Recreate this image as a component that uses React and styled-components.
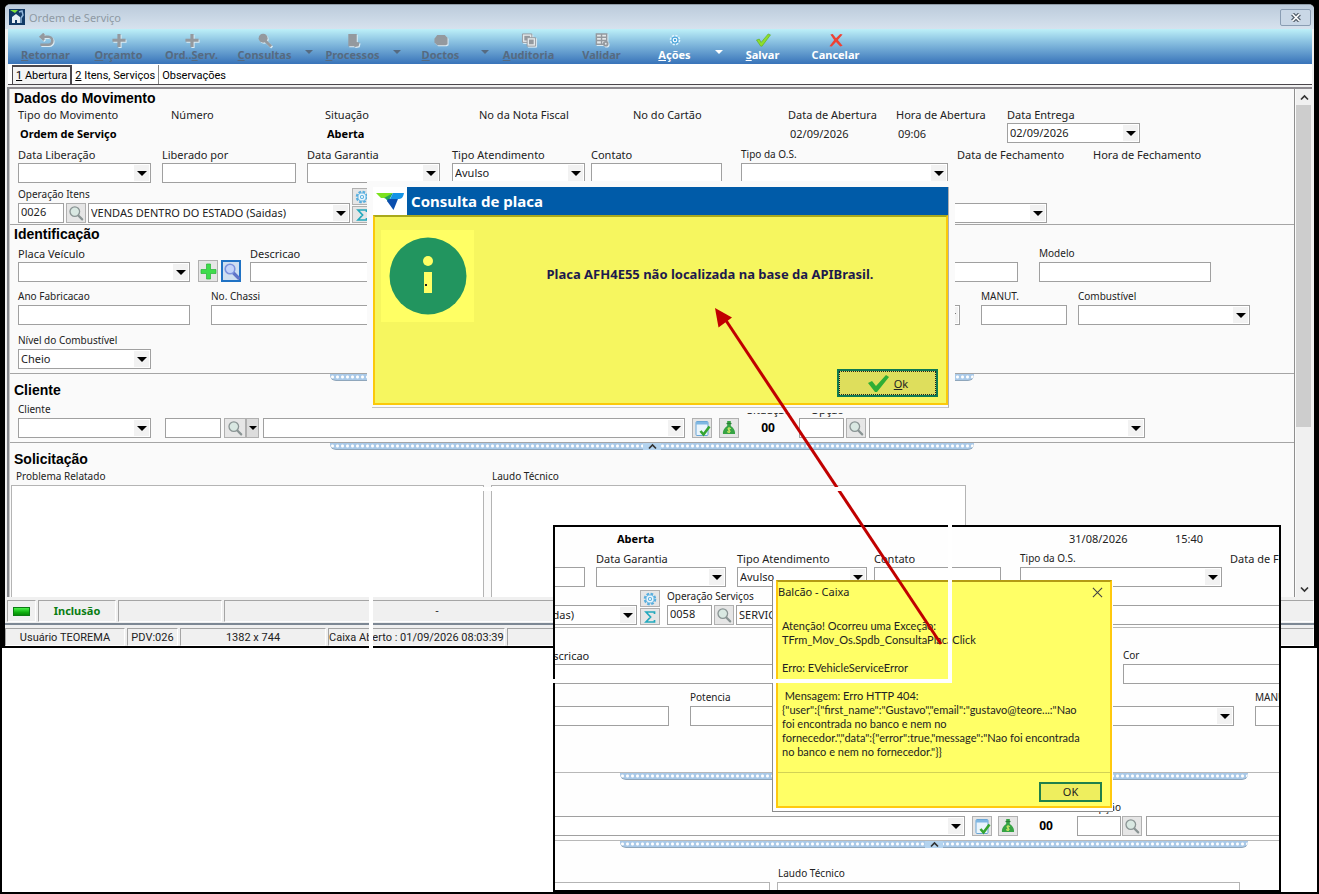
import React, { useId } from 'react';
import styled, { createGlobalStyle, css } from 'styled-components';

const GlobalStyle = createGlobalStyle`
  * {
    box-sizing: border-box;
  }
  body {
    margin: 0;
    background: #fff;
  }
  button, input, select, textarea {
    font: inherit;
    color: inherit;
    margin: 0;
    padding: 0;
    border-radius: 0;
  }
`

const Page = styled.div`
  position: relative;
  min-height: 100vh;
  border: 2px solid #000;
  overflow: hidden;
  background: #fff;
  font-family: "Noto Sans", "Open Sans", sans-serif;
  font-size: 11px;
  color: #222;
`
const Frame = styled.div`
  background: #000;
  padding: 2px 3px 2px 3px;
`
const Window = styled.div`
  background: #f0f0f0;
  border-radius: 5px 5px 0 0;
  border-top: 1px solid #8f9ba6;
  overflow: hidden;
`

/* title bar and toolbar */

const TitleBar = styled.header`
  height: 24px;
  padding: 0 3px 0 4px;
  display: flex;
  align-items: center;
  gap: 4px;
  background: linear-gradient(#bccbdb, #d6e2ee);
  color: #8f9aa4;
`
const WindowTitle = styled.h1`
  flex: 1;
  margin: 0;
  font-size: 11px;
  font-weight: 400;
`
const CloseButton = styled.button`
  width: 31px;
  height: 17px;
  display: grid;
  place-items: center;
  border: 1px solid #8a9db3;
  border-radius: 2px;
  background: #c9d7e6;
`
const ToolBar = styled.nav`
  height: 35px;
  margin: 0 2px 0 3px;
  padding-left: 1px;
  display: flex;
  background: linear-gradient(#bdf0f8, #8cc3e2 35%, #3873b9);
`
const ToolButton = styled.button`
  width: 73px;
  padding-top: 4px;
  display: flex;
  flex-direction: column;
  align-items: center;
  border: 0;
  background: none;
  font-weight: 700;
  font-size: 11px;
  line-height: 14px;
  color: ${props => (props.disabled ? '#566a80' : '#fff')};
  svg {
    width: 18px;
    height: 15px;
    ${props => props.disabled && css`filter: drop-shadow(1px 1px 0 #dcecf5);`}
  }
`
const ToolArrow = styled.button`
  width: 15px;
  display: grid;
  place-items: center;
  padding-top: 10px;
  border: 0;
  background: none;
  &::before {
    content: "";
    border: 4px solid transparent;
    border-bottom: 0;
    border-top-color: ${props => (props.disabled ? '#566a80' : '#fff')};
  }
`

/* tabs */

const Tabs = styled.div`
  height: 21px;
  margin: 0 2px 0 3px;
  padding: 1px 0 0 4px;
  display: flex;
  align-items: stretch;
  background: #fff;
  border-bottom: 1px solid #4a464b;
  font-family: Roboto, "Liberation Sans", sans-serif;
  font-size: 11px;
  color: #000;
`
const Tab = styled.button`
  padding: 2px 3px 0;
  border: 0;
  background: none;
  border-right: 1px solid #888;
  ${props => props.$active && css`
    background: #f4f4f4;
    border: 1px solid #4a464b;
    border-bottom: 0;
    border-width: 2px 2px 0 1px;
    padding-top: 0;
  `}
  &:last-child {
    border-right: 0;
  }
`

/* form */

const Body = styled.div`
  margin: 2px 2px 0 2px;
  display: flex;
  border-top: 2px solid #8d8a8f;
  border-left: 2px solid #85878c;
  background: #fafafa;
`
const Form = styled.form`
  flex: 1;
  min-width: 0;
  border-left: 1px solid #c8c8c8;
  border-right: 1px solid #8f8f8f;
`
const Section = styled.section`
  padding-bottom: ${props => props.$bottom}px;
  border-bottom: 1px solid #a5a5a5;
`
const Heading = styled.h2`
  margin: 0;
  padding-left: 4px;
  height: 19px;
  line-height: 18px;
  font-family: "Liberation Sans", Arial, sans-serif;
  font-size: 14px;
  font-weight: 700;
  color: #000;
`
const Row = styled.div`
  display: flex;
  align-items: flex-end;
  padding-left: ${props => props.$left ?? 8}px;
  margin-top: ${props => props.$top}px;
`
const FieldBox = styled.div`
  flex: 0 0 auto;
  width: ${props => props.$w}px;
  margin-left: ${props => props.$gap || 0}px;
`
const Label = styled.label`
  display: block;
  height: 15px;
  line-height: ${props => (props.$small ? 12 : 13)}px;
  white-space: nowrap;
  font-size: ${props => (props.$small ? 10 : 11)}px;
  text-align: ${props => props.$align || 'left'};
`
const Value = styled.output`
  display: block;
  height: 20px;
  line-height: 21px;
  padding-left: 2px;
  white-space: nowrap;
  font-weight: ${props => (props.$bold ? 700 : 400)};
  color: ${props => (props.$bold ? '#000' : '#222')};
`
const TextInput = styled.input`
  display: block;
  width: 100%;
  height: 20px;
  padding: 0 2px 3px;
  border: 1px solid #a0a0a0;
  background: #fff;
`
const ComboBox = styled.div`
  position: relative;
  flex: ${props => (props.$w ? `0 0 ${props.$w}px` : '1')};
  min-width: 0;
  margin-left: ${props => props.$gap || 0}px;
  display: grid;
  select {
    grid-area: 1 / 1;
    width: 100%;
    height: 20px;
    padding: 0 18px 2px 2px;
    appearance: none;
    border: 1px solid #a0a0a0;
    background: linear-gradient(#f2f2f2, #f2f2f2) right 1px center / 15px 16px no-repeat #fff;
  }
  &::after {
    content: "";
    grid-area: 1 / 1;
    align-self: center;
    justify-self: end;
    margin-right: 4px;
    border: 5px solid transparent;
    border-bottom: 0;
    border-top-color: #000;
    pointer-events: none;
  }
`
const IconButton = styled.button`
  flex: 0 0 auto;
  width: ${props => props.$w || 20}px;
  height: ${props => props.$h || 20}px;
  margin-left: ${props => props.$gap || 0}px;
  display: grid;
  place-items: center;
  border: ${props => (props.$focus ? '2px solid #1f72c4' : '1px solid #b0b0b0')};
  background: ${props => (props.$focus ? '#cfdff0' : '#e6e6e6')};
`
const DropButton = styled(IconButton)`
  background: #dcdcdc;
  &::before {
    content: "";
    border: 4px solid transparent;
    border-bottom: 0;
    border-top-color: #000;
  }
`
const Stack = styled.div`
  display: flex;
  flex-direction: column;
  gap: 1px;
  margin-left: ${props => props.$gap}px;
`
const Controls = styled.div`
  display: flex;
`
const Situation = styled.output`
  display: block;
  height: 20px;
  line-height: 20px;
  text-align: center;
  font-size: 12px;
  font-weight: 700;
  color: #000;
`
const SplitterBar = styled.div`
  width: ${props => props.$w}px;
  height: 7px;
  margin: 0 auto;
  display: flex;
  justify-content: center;
  border-radius: 0 0 6px 6px;
  border-bottom: 1px solid #8fa6bb;
  background: radial-gradient(circle, #fff 1px, #a9c9e8 2px) 0 0 / 5px 6px;
`
const Knob = styled.button`
  width: 18px;
  height: 7px;
  display: grid;
  place-items: center;
  border: 0;
  background: #b3d3ef;
`
const Memo = styled.textarea`
  display: block;
  width: 100%;
  height: ${props => props.$h}px;
  resize: none;
  border: 1px solid #b4b4b4;
  border-bottom: 0;
  background: #fff;
`
const MemoLabel = styled(Label)`
  padding-left: ${props => props.$left}px;
`

/* scroll bar */

const ScrollBar = styled.div`
  width: 16px;
  margin-left: 1px;
  display: flex;
  flex-direction: column;
  background: #f0f0f0;
`
const ScrollButton = styled.button`
  height: 16px;
  display: grid;
  place-items: center;
  border: 0;
  background: #f0f0f0;
`
const Thumb = styled.div`
  height: 322px;
  margin-right: 1px;
  background: #cdcdcd;
`
const Track = styled.div`
  flex: 1;
`

/* status bars */

const StatusBar = styled.footer`
  height: ${props => props.$h}px;
  padding: ${props => props.$top}px 0 0 ${props => props.$left}px;
  display: flex;
  gap: 2px;
  font-family: Roboto, "Liberation Sans", sans-serif;
  color: #222;
`
const StatusCell = styled.div`
  flex: ${props => (props.$w ? `0 0 ${props.$w}px` : '1')};
  display: flex;
  align-items: center;
  justify-content: center;
  white-space: nowrap;
  border: 1px solid #a5a5a5;
  border-right-color: #fff;
  border-bottom-color: #fff;
  font-size: 11px;
`
const Mode = styled.strong`
  font-family: "Noto Sans", sans-serif;
  line-height: 16px;
  color: #0a7d12;
`
const Lamp = styled.span`
  width: 17px;
  height: 9px;
  border: 1px solid #0a7d12;
  background: linear-gradient(#4cf04c, #10b010 60%, #078a07);
`
const Divider = styled.div`
  margin: 1px 0 3px;
  height: 2px;
  background: #7d8894;
`

/* plate dialog */

const PlateShot = styled.div`
  position: absolute;
  left: 365px;
  top: 179px;
  width: 588px;
  padding: 6px 6px 5px 5px;
  background: #fafafa;
`
const PlateDialog = styled.div`
  border-right: 1px solid #b0b0b0;
  border-bottom: 1px solid #c4c4c4;
  padding: 0 0 2px 1px;
`
const PlateTitle = styled.div`
  display: flex;
  height: 28px;
`
const Logo = styled.div`
  width: 34px;
  display: grid;
  place-items: center;
  background: #fff;
`
const PlateHeading = styled.h2`
  flex: 1;
  margin: 0;
  padding-left: 4px;
  line-height: 29px;
  font-size: 15px;
  font-weight: 700;
  color: #fff;
  background: #005ba8;
`
const PlateBody = styled.div`
  height: 190px;
  padding: 13px 8px 6px 6px;
  display: grid;
  grid-template-columns: 93px 1fr;
  grid-template-rows: 92px 1fr;
  background: #f6f65f;
  border: 2px solid #fbc90a;
  border-top-color: #a9a91c;
`
const InfoBadge = styled.div`
  display: grid;
  place-items: center;
  background: #ffff64;
`
const PlateMessage = styled.p`
  margin: 0;
  padding-left: 8px;
  text-align: center;
  line-height: 88px;
  font-size: 13px;
  font-weight: 700;
  color: #1d1a4d;
`
const PlateOk = styled.button`
  grid-column: 1 / 3;
  justify-self: end;
  align-self: end;
  width: 101px;
  height: 28px;
  display: flex;
  align-items: center;
  justify-content: center;
  gap: 4px;
  border: 2px solid #0f7a52;
  outline: 1px dotted #222;
  outline-offset: -3px;
  background: #dede5c;
  color: #222;
`

/* second capture */

const Inset = styled.div`
  position: absolute;
  left: 551px;
  top: 523px;
  width: 728px;
  height: 367px;
  border: 2px solid #000;
  background: #fefefe;
  overflow: hidden;
`
const InsetBody = styled.div`
  width: 1000px;
  margin-left: -179px;
`
const InsetSection = styled.div`
  padding-bottom: ${props => props.$bottom}px;
  border-bottom: 1px solid #b8b8b8;
`
const InsetSplitter = styled.div`
  width: 872px;
  padding-left: 244px;
`
const ErrorShot = styled.div`
  position: absolute;
  left: 217px;
  top: 53px;
  width: 341px;
  padding: 0 1px 3px 3px;
  border-left: 1px solid #8c8c8c;
  border-bottom: 1px solid #8c8c8c;
  background: #fff;
`
const ErrorBox = styled.div`
  border: 2px solid #ffc90e;
  border-top: 2px solid #b49b14;
  background: #ffff66;
  color: #222;
`
const ErrorTitle = styled.div`
  height: 37px;
  display: flex;
  justify-content: space-between;
  line-height: 20px;
  button {
    width: 26px;
    height: 20px;
    display: grid;
    place-items: center;
    border: 0;
    background: none;
  }
`
const ErrorText = styled.p`
  margin: 0;
  height: 154px;
  padding-left: 4px;
  font-family: Lato, "Noto Sans", sans-serif;
  line-height: 14px;
  white-space: pre;
  border-bottom: 1px solid #d2d255;
`
const ErrorActions = styled.div`
  padding: 9px 8px 4px;
  display: flex;
  justify-content: flex-end;
  button {
    width: 63px;
    height: 20px;
    line-height: 16px;
    border: 2px solid #20804a;
    background: #eeee5e;
  }
`
const Outline = styled.div`
  position: absolute;
  left: 367px;
  top: 485px;
  width: 583px;
  height: 196px;
  border: 4px solid #fff;
  pointer-events: none;
`
const Arrow = styled.svg`
  position: absolute;
  left: 708px;
  top: 300px;
  pointer-events: none;
`

/* icons */

const SearchIcon = ({ color = '#8a9494', fill = '#d9e8e2' }) => (
  <svg width="16" height="16" viewBox="0 0 16 16">
    <path d="M9.8 10l4.4 4.4" stroke={color} strokeWidth="2.2" strokeLinecap="round" />
    <circle cx="6.8" cy="6.6" r="4.8" fill={fill} stroke={color} strokeWidth="1.3" />
  </svg>
)
const GearIcon = ({ color = '#58aede' }) => (
  <svg width="14" height="14" viewBox="0 0 16 16">
    <circle cx="8" cy="8" r="6" fill="none" stroke={color} strokeWidth="2.4" strokeDasharray="3 1.7" />
    <circle cx="8" cy="8" r="4.6" fill="#e9f6fd" stroke={color} strokeWidth="1" />
    <circle cx="8" cy="8" r="1.8" fill="#fff" stroke={color} strokeWidth="1.2" />
  </svg>
)
const SigmaIcon = () => (
  <svg width="14" height="14" viewBox="0 0 14 14">
    <path d="M11.5 4V2H3l4.6 5L3 12h8.500v-2" fill="none" stroke="#23a9bd" strokeWidth="1.7" />
  </svg>
)
const PlusIcon = () => (
  <svg width="17" height="17" viewBox="0 0 17 17">
    <path d="M6.5 1h4v5.500H16v4h-5.500V16h-4v-5.500H1v-4h5.500z" fill="#3fdc4c" stroke="#25b535" strokeWidth=".7" />
  </svg>
)
const PlateSearchIcon = () => (
  <svg width="18" height="18" viewBox="0 0 18 18">
    <path d="M10 10.500l5.500 5.500" stroke="#5f74c8" strokeWidth="3.200" strokeLinecap="round" />
    <circle cx="7" cy="7" r="4.800" fill="#c3d4fa" stroke="#7d93dd" strokeWidth="1.600" />
  </svg>
)
const NoteIcon = () => (
  <svg width="17" height="17" viewBox="0 0 17 17">
    <rect x="2" y="1.500" width="12" height="14" rx="1" fill="#eaf4fc" stroke="#6aa6d6" />
    <path d="M2 2h12v2.500H2z" fill="#7fb7e2" />
    <path d="M6.500 11l3 3.500 6-8" fill="none" stroke="#35a52f" strokeWidth="2.600" />
  </svg>
)
const MoneyIcon = () => (
  <svg width="16" height="16" viewBox="0 0 16 16">
    <path d="M6.200 1h3.600v5C12.500 7.500 14.500 11 14 14H2c-.5-3 1.500-6.500 4.200-8z" fill="#36a344" />
    <path d="M5.500 3.500h5" stroke="#2b7c36" strokeWidth="1.200" />
    <path d="M9.800 8.500c-2.600-1.400-4.200.6-1.800 1.500s1.200 3-2 1.700M8 7.500v5.500" fill="none" stroke="#dff06a" strokeWidth="1" />
  </svg>
)
const XIcon = ({ size = 11, color = '#444', width = 1.2 }) => (
  <svg width={size} height={size} viewBox="0 0 12 12">
    <path d="M1 1l10 10M11 1L1 11" stroke={color} strokeWidth={width} />
  </svg>
)
const Caret = ({ down }) => (
  <svg width="9" height="7" viewBox="0 0 9 7">
    <path d={down ? 'M1 1.500l3.500 3.500L8 1.500' : 'M1 5.500L4.500 2 8 5.500'} fill="none" stroke="#333" strokeWidth="1.700" />
  </svg>
)

const gray = '#94999e'
const toolIcons = {
  back: <path d="M3 4h8.500a4 4 0 010 8.500H3M7 .8L3.500 4 7 7.500" fill="none" stroke={gray} strokeWidth="2.800" />,
  plus: <path d="M7.300 1h3.400v5H16v3.400h-5.300V15H7.300V9.400H2V6h5.300z" fill={gray} />,
  search: (
    <>
      <circle cx="7" cy="5.500" r="4.800" fill={gray} />
      <path d="M9.500 8.500l6 6" stroke={gray} strokeWidth="3" />
    </>
  ),
  process: <path d="M4 1h9v8.500l3 .5-1 4-4 1-1-1H4z" fill={gray} />,
  docs: <path d="M5 2h8l3 3v7l-2 1H5l-3-3V6z" fill={gray} />,
  audit: (
    <>
      <path d="M2 1h10v9H2z" fill="#e4e8ea" stroke={gray} />
      <path d="M4 3h6v5H4z" fill={gray} />
      <path d="M7 5h9v9H7z" fill="#e4e8ea" stroke={gray} />
      <path d="M9 7h5v5H9z" fill={gray} />
    </>
  ),
  check: (
    <>
      <path d="M3 1h11v11H3zM8.500 1v11M3 4.500h11M3 8h11" fill="#e4e8ea" stroke={gray} strokeWidth="1.500" />
      <circle cx="13" cy="11.500" r="3" fill={gray} />
      <circle cx="13" cy="11.500" r="1" fill="#e4e8ea" />
    </>
  ),
  gear: (
    <>
      <circle cx="9" cy="7.500" r="4.500" fill="none" stroke="#dff3fd" strokeWidth="2.400" strokeDasharray="2.200 1.300" />
      <circle cx="9" cy="7.500" r="3.200" fill="#fff" stroke="#4ba5dc" strokeWidth="1.300" />
      <circle cx="9" cy="7.500" r="1.300" fill="#4ba5dc" />
    </>
  ),
  save: <path d="M2 7.500l3-1 2 3.500L14.500 1 17 2 8 14H6.500z" fill="#8ede2c" stroke="#5aa81c" strokeWidth=".6" />,
  cancel: <path d="M3 1.500l2.500-.5L9 5.500 13.500 1l2.500.5-5 6 5 6-2.500 1L9 9.500 4.500 14.500 2 14l5-6.500z" fill="#ee4234" />,
}

const tools = [
  { icon: 'back', key: 'R', rest: 'etornar', off: true },
  { icon: 'plus', key: 'O', rest: 'rçamto', off: true },
  { icon: 'plus', pre: 'Ord..', key: 'S', rest: 'erv.', off: true },
  { icon: 'search', key: 'C', rest: 'onsultas', off: true, menu: true },
  { icon: 'process', key: 'P', rest: 'rocessos', off: true, menu: true },
  { icon: 'docs', key: 'D', rest: 'octos', off: true, menu: true },
  { icon: 'audit', key: 'A', rest: 'uditoria', off: true },
  { icon: 'check', pre: 'Valida', rest: 'r', off: true },
  { icon: 'gear', key: 'A', rest: 'ções', menu: true },
  { icon: 'save', key: 'S', rest: 'alvar' },
  { icon: 'cancel', pre: 'Cancelar' },
]

/* form pieces */

const Combo = ({ id, name, value = '', w, gap }) => (
  <ComboBox $w={w} $gap={gap}>
    <select id={id} aria-label={name} defaultValue={value}>
      <option>{value}</option>
    </select>
  </ComboBox>
)

function Field({ label, name, w, gap, combo, value, align, small }) {
  const id = useId()
  return (
    <FieldBox $w={w} $gap={gap}>
      {label && <Label htmlFor={id} $align={align} $small={small}>{label}</Label>}
      {combo
        ? <Combo id={id} name={name} value={value} />
        : <TextInput id={id} aria-label={name} defaultValue={value} />}
    </FieldBox>
  )
}

function Info({ label, w, value, bold }) {
  const id = useId()
  return (
    <FieldBox $w={w}>
      <Label htmlFor={id}>{label}</Label>
      <Value id={id} $bold={bold}>{value}</Value>
    </FieldBox>
  )
}

// code box + lookup button + description list
function Lookup({ label, name, w, gap, codeWidth, code, value }) {
  const id = useId()
  return (
    <FieldBox $w={w} $gap={gap}>
      {label && <Label htmlFor={id} $small>{label}</Label>}
      <Controls>
        <FieldBox $w={codeWidth}><TextInput id={id} aria-label={name} defaultValue={code} /></FieldBox>
        <IconButton type="button" aria-label="Pesquisar" $gap={2}><SearchIcon /></IconButton>
        <Combo name={label || name} value={value} gap={2} />
      </Controls>
    </FieldBox>
  )
}

const SideButtons = ({ gap }) => (
  <Stack $gap={gap}>
    <IconButton type="button" aria-label="Configurar" $h={17}><GearIcon /></IconButton>
    <IconButton type="button" aria-label="Somar" $h={17}><SigmaIcon /></IconButton>
  </Stack>
)

const Splitter = ({ w }) => (
  <SplitterBar $w={w}>
    <Knob type="button" aria-label="Recolher"><Caret /></Knob>
  </SplitterBar>
)

function MemoField({ label, name, w, gap, h, left }) {
  const id = useId()
  return (
    <FieldBox $w={w} $gap={gap}>
      {label && <MemoLabel htmlFor={id} $left={left} $small>{label}</MemoLabel>}
      <Memo id={id} $h={h} aria-label={name} />
    </FieldBox>
  )
}

function OrderForm() {
  return (
    <Form>
      <Section $bottom={1}>
        <Heading>Dados do Movimento</Heading>
        <Row $top={0}>
          <Info label="Tipo do Movimento" w={153} value="Ordem de Serviço" bold />
          <Info label="Número" w={154} />
          <Info label="Situação" w={154} value="Aberta" bold />
          <Info label="No da Nota Fiscal" w={154} />
          <Info label="No do Cartão" w={155} />
          <Info label="Data de Abertura" w={108} value="02/09/2026" />
          <Info label="Hora de Abertura" w={111} value="09:06" />
          <Field label="Data Entrega" w={133} combo value="02/09/2026" />
        </Row>
        <Row $top={5}>
          <Field label="Data Liberação" w={133} combo />
          <Field label="Liberado por" w={134} gap={11} />
          <Field label="Data Garantia" w={133} gap={11} combo />
          <Field label="Tipo Atendimento" w={133} gap={12} combo value="Avulso" />
          <Field label="Contato" w={131} gap={6} />
          <Field label="Tipo da O.S." w={207} gap={19} combo small />
          <FieldBox $w={9} />
          <Info label="Data de Fechamento" w={136} />
          <Info label="Hora de Fechamento" w={108} />
        </Row>
        <Row $top={5}>
          <Lookup label="Operação Itens" w={332} codeWidth={46} code="0026" value="VENDAS DENTRO DO ESTADO (Saidas)" />
          <SideButtons gap={2} />
          <Lookup name="Operação Serviços" w={667} gap={8} codeWidth={46} />
        </Row>
      </Section>

      <Section $bottom={4}>
        <Heading>Identificação</Heading>
        <Row $top={3}>
          <Field label="Placa Veículo" w={172} combo />
          <IconButton type="button" aria-label="Adicionar placa" $gap={8} $h={22}><PlusIcon /></IconButton>
          <IconButton type="button" aria-label="Consultar placa" $gap={3} $h={22} $focus>
            <PlateSearchIcon />
          </IconButton>
          <Field label="Descricao" w={576} gap={9} />
          <Field name="Cor" w={171} gap={21} />
          <Field label="Modelo" w={172} gap={21} small />
        </Row>
        <Row $top={8}>
          <Field label="Ano Fabricacao" w={172} small />
          <Field label="No. Chassi" w={172} gap={21} small />
          <Field name="Potencia" w={172} gap={21} />
          <Field name="Tração" w={171} gap={21} />
          <Field name="Câmbio" w={172} gap={20} combo />
          <Field label="MANUT." w={86} gap={21} small />
          <Field label="Combustível" w={172} gap={11} combo small />
        </Row>
        <Row $top={9}>
          <Field label="Nível do Combustível" w={133} combo value="Cheio" small />
        </Row>
      </Section>

      <Section $bottom={4}>
        <Splitter w={644} />
        <Heading>Cliente</Heading>
        <Row $top={3}>
          <Field label="Cliente" w={133} combo small />
          <FieldBox $w={56} $gap={14}><TextInput aria-label="Código do cliente" /></FieldBox>
          <IconButton type="button" aria-label="Pesquisar cliente" $gap={3} $w={22}><SearchIcon /></IconButton>
          <DropButton type="button" aria-label="Mais opções" $w={13} />
          <Combo name="Nome do cliente" w={422} gap={4} />
          <IconButton type="button" aria-label="Ficha" $gap={7}><NoteIcon /></IconButton>
          <IconButton type="button" aria-label="Financeiro" $gap={7}><MoneyIcon /></IconButton>
          <FieldBox $w={42} $gap={8}>
            <Label as="span">Situação</Label>
            <Situation>00</Situation>
          </FieldBox>
          <Field label="Opção" w={45} gap={10} align="right" />
          <IconButton type="button" aria-label="Pesquisar opção" $gap={2}><SearchIcon /></IconButton>
          <Combo name="Descrição da opção" w={276} gap={3} />
        </Row>
      </Section>

      <Splitter w={644} />
      <Heading>Solicitação</Heading>
      <Row $top={1} $left={1}>
        <MemoField label="Problema Relatado" w={473} h={112} left={5} />
        <MemoField label="Laudo Técnico" w={475} gap={7} h={112} left={1} />
      </Row>
    </Form>
  )
}

function OrderWindow() {
  return (
    <Window>
      <TitleBar>
        <svg width="16" height="16" viewBox="0 0 16 16">
          <rect width="16" height="16" fill="#123a66" />
          <path d="M1 1h8L6 4z" fill="#7fe03a" />
          <path d="M3 8l4-3 4 3v6H8v-3H6v3H3z" fill="#e6eef5" />
          <path d="M10 3l3-1 1 4-2 3v5" stroke="#8fb4d8" strokeWidth="1.500" fill="none" />
        </svg>
        <WindowTitle>Ordem de Serviço</WindowTitle>
        <CloseButton type="button" aria-label="Fechar">
          <svg width="12" height="9" viewBox="0 0 12 9">
            <path d="M2.500 1l7 7M9.500 1l-7 7" stroke="#56616d" strokeWidth="4" />
            <path d="M2.500 1l7 7M9.500 1l-7 7" stroke="#fff" strokeWidth="1.600" />
          </svg>
        </CloseButton>
      </TitleBar>
      <ToolBar>
        {tools.map((tool, i) => (
          <React.Fragment key={i}>
            <ToolButton type="button" disabled={tool.off}>
              <svg viewBox="0 0 18 16">{toolIcons[tool.icon]}</svg>
              <span>{tool.pre}{tool.key && <u>{tool.key}</u>}{tool.rest}</span>
            </ToolButton>
            {tool.menu && <ToolArrow type="button" disabled={tool.off} aria-label="Abrir menu" />}
          </React.Fragment>
        ))}
      </ToolBar>
      <Tabs role="tablist">
        <Tab type="button" role="tab" $active><u>1</u> Abertura</Tab>
        <Tab type="button" role="tab"><u>2</u> Itens, Serviços</Tab>
        <Tab type="button" role="tab">Observações</Tab>
      </Tabs>
      <Body>
        <OrderForm />
        <ScrollBar>
          <ScrollButton type="button" aria-label="Subir"><Caret /></ScrollButton>
          <Thumb />
          <Track />
          <ScrollButton type="button" aria-label="Descer"><Caret down /></ScrollButton>
        </ScrollBar>
      </Body>
      <StatusBar $h={25} $left={2} $top={3}>
        <StatusCell $w={29}><Lamp /></StatusCell>
        <StatusCell $w={78}><Mode>Inclusão</Mode></StatusCell>
        <StatusCell $w={104} />
        <StatusCell $w={426}>-</StatusCell>
        <StatusCell />
      </StatusBar>
      <Divider />
      <StatusBar $h={18} $left={0} $top={0}>
        <StatusCell $w={120}>Usuário TEOREMA</StatusCell>
        <StatusCell $w={51}>PDV:026</StatusCell>
        <StatusCell $w={146}>1382 x 744</StatusCell>
        <StatusCell $w={175}>Caixa Aberto : 01/09/2026 08:03:39</StatusCell>
        <StatusCell />
      </StatusBar>
    </Window>
  )
}

function PlateAlert() {
  return (
    <PlateShot>
      <PlateDialog role="dialog" aria-label="Consulta de placa">
        <PlateTitle>
          <Logo>
            <svg width="30" height="20" viewBox="0 0 30 20">
              <path d="M1 2h17l-5 3.500c-1 1-2 1.500-4 1.500H6z" fill="#7be21c" />
              <path d="M9 7l9-5-5 9c-1-2-2-3.500-4-4z" fill="#23a35a" />
              <path d="M18 2h11c-.5 3-2 6-5 6h-9z" fill="#1493e6" />
              <path d="M13 8h10l-4.500 11L12 10z" fill="#0b4fae" />
            </svg>
          </Logo>
          <PlateHeading>Consulta de placa</PlateHeading>
        </PlateTitle>
        <PlateBody>
          <InfoBadge>
            <svg width="78" height="78" viewBox="0 0 78 78">
              <circle cx="39" cy="39" r="38.500" fill="#22955f" />
              <circle cx="39" cy="24" r="5" fill="#ffff64" />
              <rect x="35" y="35" width="8" height="21" fill="#ffff64" />
              <rect x="36" y="47" width="2" height="2" fill="#222" />
            </svg>
          </InfoBadge>
          <PlateMessage>Placa AFH4E55 não localizada na base da APIBrasil.</PlateMessage>
          <PlateOk type="button">
            <svg width="23" height="17" viewBox="0 0 23 17">
              <path d="M1 8l4-2 4 5L19 0l3 2L10 17H8z" fill="#2fae35" />
            </svg>
            <span><u>O</u>k</span>
          </PlateOk>
        </PlateBody>
      </PlateDialog>
    </PlateShot>
  )
}

const errorMessage = `Atenção! Ocorreu uma Exceção:
TFrm_Mov_Os.Spdb_ConsultaPlacaClick

Erro: EVehicleServiceError

 Mensagem: Erro HTTP 404:
{"user":{"first_name":"Gustavo","email":"gustavo@teore...:"Nao
foi encontrada no banco e nem no
fornecedor.","data":{"error":true,"message":"Nao foi encontrada
no banco e nem no fornecedor."}}`

function ErrorCapture() {
  return (
    <Inset>
      <InsetBody>
        <InsetSection $bottom={2}>
          <Row $top={1} $left={239}>
            <FieldBox $w={452}><Value $bold>Aberta</Value></FieldBox>
            <FieldBox $w={106}><Value>31/08/2026</Value></FieldBox>
            <FieldBox $w={60}><Value>15:40</Value></FieldBox>
          </Row>
          <Row $top={4} $left={78}>
            <Field name="Liberado por" w={131} />
            <Field label="Data Garantia" w={130} gap={11} combo />
            <Field label="Tipo Atendimento" w={130} gap={11} combo value="Avulso" />
            <Field label="Contato" w={127} gap={7} />
            <Field label="Tipo da O.S." w={202} gap={19} combo small />
            <FieldBox $w={8} />
            <Info label="Data de Fechamento" w={120} />
          </Row>
          <Row $top={3} $left={0}>
            <Combo name="Operação Itens" value="VENDAS DENTRO DO ESTADO (Saidas)" w={261} />
            <SideButtons gap={3} />
            <Lookup label="Operação Serviços" w={720} gap={7} codeWidth={45} code="0058" value="SERVICOS" />
          </Row>
        </InsetSection>
        <InsetSection $bottom={46}>
          <Row $top={21} $left={163}>
            <Field label="Descricao" w={563} />
            <Field label="Cor" w={167} gap={21} small />
          </Row>
          <Row $top={7} $left={126}>
            <Field name="No. Chassi" w={167} />
            <Field label="Potencia" w={168} gap={21} small />
            <Field name="Câmbio" w={355} gap={21} combo />
            <Field label="MANUT." w={84} gap={21} small />
          </Row>
        </InsetSection>
        <InsetSplitter><Splitter w={628} /></InsetSplitter>
        <InsetSection $bottom={4}>
          <Row $top={21} $left={173}>
            <Combo name="Nome do cliente" w={416} />
            <IconButton type="button" aria-label="Ficha" $gap={7}><NoteIcon /></IconButton>
            <IconButton type="button" aria-label="Financeiro" $gap={6}><MoneyIcon /></IconButton>
            <FieldBox $w={44} $gap={6}><Situation>00</Situation></FieldBox>
            <Field label="Opção" w={44} gap={9} align="right" small />
            <IconButton type="button" aria-label="Pesquisar opção" $gap={1}><SearchIcon /></IconButton>
            <Combo name="Descrição da opção" w={269} gap={4} />
          </Row>
        </InsetSection>
        <InsetSplitter><Splitter w={628} /></InsetSplitter>
        <Row $top={19} $left={0}>
          <MemoField name="Problema Relatado" w={394} h={40} left={1} />
          <MemoField label="Laudo Técnico" w={463} gap={7} h={40} left={1} />
        </Row>
      </InsetBody>
      <ErrorShot role="dialog" aria-label="Balcão - Caixa">
        <ErrorBox>
          <ErrorTitle>
            Balcão - Caixa
            <button type="button" aria-label="Fechar"><XIcon /></button>
          </ErrorTitle>
          <ErrorText>{errorMessage}</ErrorText>
          <ErrorActions><button type="button">OK</button></ErrorActions>
        </ErrorBox>
      </ErrorShot>
    </Inset>
  )
}

function App() {
  return (
    <Page>
      <GlobalStyle />
      <Frame>
        <OrderWindow />
      </Frame>
      <PlateAlert />
      <ErrorCapture />
      <Arrow width="240" height="350" viewBox="0 0 240 350">
        <path d="M15 17L231 342" stroke="#c00000" strokeWidth="3" />
        <path d="M5 6l17 9.500-13.500 10z" fill="#c00000" />
      </Arrow>
      <Outline />
    </Page>
  )
}

export default App
